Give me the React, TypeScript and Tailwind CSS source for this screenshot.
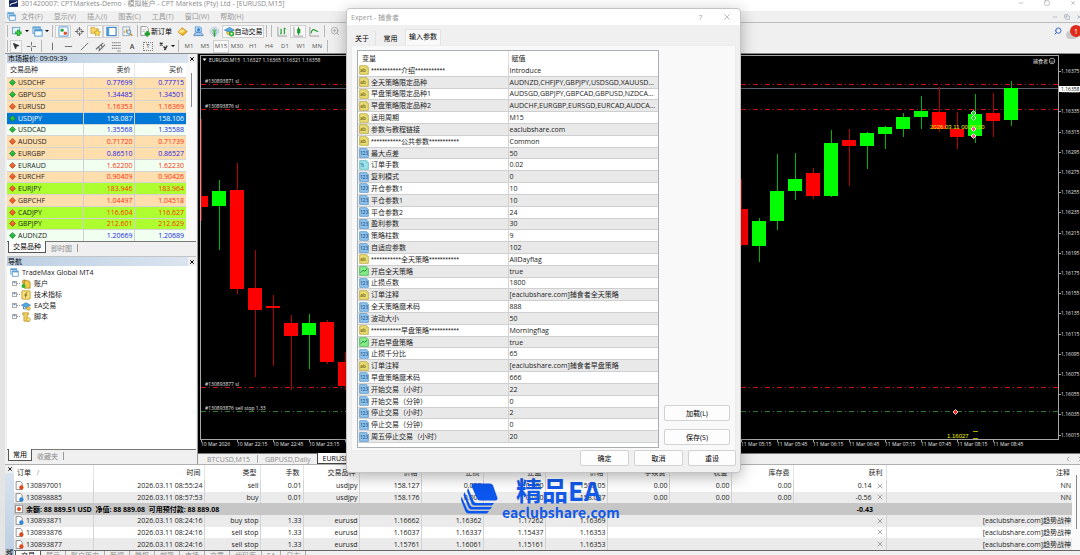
import type { ReactNode } from 'react'
import clsx from 'clsx'
import { Search, X, Minus, Square, Copy, ZoomIn, ZoomOut, MousePointer2, ChevronLeft, ChevronRight } from 'lucide-react'

const FONT = "font-['Open_Sans','Noto_Sans_CJK_SC',sans-serif]"

/* ---------- data ---------- */

type Tone = 'peach' | 'mint' | 'lime' | 'selected'

interface Quote {
  symbol: string
  bid: string
  ask: string
  up: boolean
  blue: boolean
  tone: Tone
}

const quotes: Quote[] = [
  { symbol: 'USDCHF', bid: '0.77699', ask: '0.77715', up: true, blue: true, tone: 'peach' },
  { symbol: 'GBPUSD', bid: '1.34485', ask: '1.34501', up: true, blue: true, tone: 'peach' },
  { symbol: 'EURUSD', bid: '1.16353', ask: '1.16369', up: false, blue: false, tone: 'peach' },
  { symbol: 'USDJPY', bid: '158.087', ask: '158.106', up: true, blue: false, tone: 'selected' },
  { symbol: 'USDCAD', bid: '1.35568', ask: '1.35588', up: true, blue: true, tone: 'mint' },
  { symbol: 'AUDUSD', bid: '0.71720', ask: '0.71739', up: false, blue: false, tone: 'peach' },
  { symbol: 'EURGBP', bid: '0.86510', ask: '0.86527', up: true, blue: true, tone: 'peach' },
  { symbol: 'EURAUD', bid: '1.62200', ask: '1.62230', up: false, blue: false, tone: 'mint' },
  { symbol: 'EURCHF', bid: '0.90409', ask: '0.90426', up: false, blue: false, tone: 'peach' },
  { symbol: 'EURJPY', bid: '183.946', ask: '183.964', up: false, blue: false, tone: 'lime' },
  { symbol: 'GBPCHF', bid: '1.04497', ask: '1.04518', up: false, blue: false, tone: 'peach' },
  { symbol: 'CADJPY', bid: '116.604', ask: '116.627', up: false, blue: false, tone: 'lime' },
  { symbol: 'GBPJPY', bid: '212.601', ask: '212.629', up: false, blue: false, tone: 'lime' },
  { symbol: 'AUDNZD', bid: '1.20669', ask: '1.20689', up: true, blue: true, tone: 'mint' },
]

const toneClass: Record<Tone, string> = {
  peach: 'bg-[#ffdead]',
  mint: 'bg-[#f0fff0]',
  lime: 'bg-[#adff2f]',
  selected: 'bg-[#0078d7] text-white',
}

type ParamKind = 'ab' | 'int' | 'dbl' | 'bool'

const params: [ParamKind, string, string][] = [
  ['ab', '***********介绍***********', 'Introduce'],
  ['ab', '全天策略限定品种', 'AUDNZD,CHFJPY,GBPJPY,USDSGD,XAUUSD...'],
  ['ab', '早盘策略限定品种1', 'AUDSGD,GBPJPY,GBPCAD,GBPUSD,NZDCA...'],
  ['ab', '早盘策略限定品种2', 'AUDCHF,EURGBP,EURSGD,EURCAD,AUDCA...'],
  ['ab', '适用周期', 'M15'],
  ['ab', '参数与教程链接', 'eaclubshare.com'],
  ['ab', '***********公共参数***********', 'Common'],
  ['int', '最大点差', '50'],
  ['dbl', '订单手数', '0.02'],
  ['int', '复利模式', '0'],
  ['int', '开仓参数1', '10'],
  ['int', '平仓参数1', '10'],
  ['int', '平仓参数2', '24'],
  ['int', '盈利参数', '30'],
  ['int', '策略柱数', '9'],
  ['int', '自适应参数', '102'],
  ['ab', '***********全天策略***********', 'AllDayflag'],
  ['bool', '开启全天策略', 'true'],
  ['int', '止损点数', '1800'],
  ['ab', '订单注释', '[eaclubshare.com]捕食者全天策略'],
  ['int', '全天策略魔术码', '888'],
  ['int', '波动大小', '50'],
  ['ab', '***********早盘策略***********', 'Morningflag'],
  ['bool', '开启早盘策略', 'true'],
  ['int', '止损千分比', '65'],
  ['ab', '订单注释', '[eaclubshare.com]捕食者早盘策略'],
  ['int', '早盘策略魔术码', '666'],
  ['int', '开始交易（小时）', '22'],
  ['int', '开始交易（分钟）', '0'],
  ['int', '停止交易（小时）', '2'],
  ['int', '停止交易（分钟）', '0'],
  ['int', '周五停止交易（小时）', '20'],
]

interface Order {
  id: string
  buy: boolean
  cells: string[]
  profit: string
  note: string
}

const openOrders: Order[] = [
  { id: '130897001', buy: false, cells: ['2026.03.11 08:55:24', 'sell', '0.01', 'usdjpy', '158.127', '0.000', '0.000', '158.105', '0.00', '0.00', '0.00'], profit: '0.14', note: 'NN' },
  { id: '130898885', buy: true, cells: ['2026.03.11 08:57:53', 'buy', '0.01', 'usdjpy', '158.176', '0.000', '0.000', '158.087', '0.00', '0.00', '0.00'], profit: '-0.56', note: 'NN' },
]

const pendingOrders: Order[] = [
  { id: '130893871', buy: true, cells: ['2026.03.11 08:24:16', 'buy stop', '1.33', 'eurusd', '1.16662', '1.16362', '1.17262', '1.16369', '', '', ''], profit: '', note: '[eaclubshare.com]趋势战神' },
  { id: '130893876', buy: false, cells: ['2026.03.11 08:24:16', 'sell stop', '1.33', 'eurusd', '1.16037', '1.16337', '1.15437', '1.16353', '', '', ''], profit: '', note: '[eaclubshare.com]趋势战神' },
  { id: '130893877', buy: false, cells: ['2026.03.11 08:24:16', 'sell stop', '1.33', 'eurusd', '1.15761', '1.16061', '1.15161', '1.16353', '', '', ''], profit: '', note: '[eaclubshare.com]趋势战神' },
]

const orderHeads = ['时间', '类型', '手数', '交易品种', '价格', '止损', '止盈', '价格', '手续费', '税金', '库存费']

// centre x, wick top, wick bottom, body top, body bottom, direction
type Candle = [number, number, number, number, number, 'u' | 'd']

const candles: Candle[] = [
  [201, 119, 221, 196, 207, 'd'],
  [219, 180, 250, 191, 206, 'u'],
  [237, 163, 294, 190, 289, 'd'],
  [255, 250, 377, 288, 310, 'd'],
  [273, 295, 366, 306, 308, 'd'],
  [291, 315, 390, 323, 336, 'd'],
  [309, 314, 369, 323, 335, 'u'],
  [327, 320, 364, 322, 362, 'd'],
  [345, 352, 390, 362, 386, 'd'],
  [741, 179, 246, 209, 245, 'd'],
  [759, 218, 262, 221, 246, 'u'],
  [777, 154, 230, 191, 221, 'u'],
  [795, 153, 200, 179, 191, 'u'],
  [813, 168, 199, 173, 196, 'd'],
  [831, 130, 197, 143, 196, 'u'],
  [849, 129, 186, 140, 146, 'd'],
  [867, 132, 169, 133, 146, 'u'],
  [885, 126, 149, 127, 134, 'u'],
  [903, 113, 137, 117, 129, 'u'],
  [921, 96, 129, 111, 117, 'u'],
  [939, 87, 132, 112, 129, 'd'],
  [957, 112, 149, 129, 137, 'd'],
  [975, 94, 143, 114, 136, 'u'],
  [993, 93, 137, 113, 121, 'd'],
  [1011, 81, 126, 88, 120, 'u'],
]

const levels = [
  { y: 84, color: '#c81414', label: '#130893871 sl' },
  { y: 109, color: '#c81414', label: '#130893876 sl' },
  { y: 387, color: '#c81414', label: '#130893877 sl' },
  { y: 411, color: '#2a7a2a', label: '#130893876 sell stop 1.33' },
]

const times: [number, string][] = [
  [201, '10 Mar 2026'], [237, '10 Mar 22:15'], [273, '10 Mar 22:45'], [309, '10 Mar 23:15'], [345, '10 Mar 23:45'],
  [741, '11 Mar 05:15'], [777, '11 Mar 05:45'], [813, '11 Mar 06:15'], [849, '11 Mar 06:45'],
  [885, '11 Mar 07:15'], [921, '11 Mar 07:45'], [957, '11 Mar 08:15'], [993, '11 Mar 08:45'],
]

const prices = Array.from({ length: 19 }, (_, i) => ({ y: 71 + i * 20.2, text: (1.16375 - i * 0.0002).toFixed(5) }))

/* ---------- small icons ---------- */

function Ico({ children, size = 'size-[11px]' }: { children: ReactNode; size?: string }) {
  return <svg viewBox="0 0 12 12" className={clsx(size, 'shrink-0')} aria-hidden="true">{children}</svg>
}

const Windows = ({ size }: { size?: string }) => (
  <Ico size={size}>
    <rect x="1" y="1" width="8" height="7" fill="#e8f4fd" stroke="#5b9fd0" />
    <path d="M1 2h8" stroke="#5b9fd0" strokeWidth="1.6" />
    <rect x="3" y="4" width="8" height="7" fill="#fff" stroke="#4a94cc" />
    <path d="M3 5h8" stroke="#4a94cc" strokeWidth="1.6" />
  </Ico>
)

const Plus = () => (
  <Ico>
    <rect x="0.5" y="1.5" width="8" height="7" fill="#e4f1fa" stroke="#6ba3c8" />
    <path d="M7 4v7M3.5 7.5h7" stroke="#1d9a26" strokeWidth="3" />
    <path d="M7 5v5M4.5 7.5h5" stroke="#3ecf46" strokeWidth="1.4" />
  </Ico>
)

const Quotes = () => (
  <Ico>
    <rect x="1" y="1" width="10" height="10" rx="1" fill="#fff" stroke="#7aaede" strokeWidth="1.3" />
    <circle cx="4.5" cy="4.5" r="1.9" fill="#2ba84a" />
    <circle cx="8" cy="7.8" r="1.9" fill="#e2512d" />
  </Ico>
)

const Target = () => (
  <Ico>
    <circle cx="6" cy="6" r="3" fill="none" stroke="#666" />
    <path d="M6 1v4M6 7v4M1 6h4M7 6h4" stroke="#666" />
  </Ico>
)

const StarFolder = () => (
  <Ico>
    <path d="M1 1.5h4l1 1.5h3v5H1z" fill="#f8d66b" stroke="#c59a2c" strokeWidth=".8" />
    <path d="M8 4l1.1 2.2 2.5.3-1.8 1.7.5 2.5L8 9.5l-2.3 1.2.5-2.5-1.8-1.7 2.5-.3z" fill="#ffe14d" stroke="#b8901f" strokeWidth=".7" />
  </Ico>
)

const Pane = () => (
  <Ico>
    <rect x="1" y="1.5" width="10" height="9" fill="#fff" stroke="#2f7cc4" strokeWidth="1.2" />
    <rect x="1" y="1.5" width="2.5" height="9" fill="#4a9be0" />
  </Ico>
)

const DocLens = () => (
  <Ico>
    <rect x="1" y="1" width="7.5" height="9.5" fill="#f2f6fa" stroke="#8fa9bf" />
    <path d="M3 8V5M5 7V3" stroke="#d6a63b" strokeWidth="1.2" />
    <circle cx="7.5" cy="6.5" r="2.2" fill="#d7ecfa" stroke="#5589b5" />
    <path d="M9 8.2l2.2 2.6" stroke="#c08b2d" strokeWidth="1.5" />
  </Ico>
)

const NewOrder = () => (
  <Ico>
    <path d="M1 .7h6l2 2v7.6H1z" fill="#fff" stroke="#777" strokeWidth=".8" />
    <path d="M2.5 4h4M2.5 6h3" stroke="#aaa" strokeWidth=".8" />
    <path d="M8 5.5v6M5 8.5h6" stroke="#1fa32b" strokeWidth="2.6" />
  </Ico>
)

const Diamond = () => (
  <Ico>
    <path d="M1 6.5L5.5 2 11 6l-4.5 4.5z" fill="#f2b526" stroke="#b37a12" strokeWidth=".8" />
    <path d="M1 6.5L5.5 3 9 5.5 5 8z" fill="#ffe07a" />
  </Ico>
)

const Market = () => (
  <Ico>
    <path d="M2.5 1H8l1 1v4.5H2.5z" fill="#d5e8fa" stroke="#3f86cf" strokeWidth=".9" />
    <path d="M1 10.5c0-3 2-3.5 5-3.5s5 1 5 3.5z" fill="#a9cdf0" stroke="#3a76b8" strokeWidth=".8" />
    <circle cx="6" cy="4" r="1.7" fill="#2f86dc" />
  </Ico>
)

const Signal = () => (
  <Ico>
    <circle cx="6" cy="6" r="4.8" fill="none" stroke="#b4cbdc" />
    <circle cx="6" cy="6" r="2.9" fill="none" stroke="#7fa6c4" />
    <path d="M6 6v5.5" stroke="#27a035" strokeWidth="1.8" />
    <circle cx="6" cy="5.5" r="1.6" fill="#53c45d" />
  </Ico>
)

const Hat = () => (
  <Ico>
    <path d="M3 5v3.5c1 1.5 5 1.5 6 0V5z" fill="#f3c74e" stroke="#b98d22" strokeWidth=".6" />
    <path d="M.5 4.5L6 1.5l5.5 3L6 6.5z" fill="#58a9df" stroke="#2f78b2" strokeWidth=".7" />
    <circle cx="8.3" cy="8.5" r="2.9" fill="#2db13c" />
    <path d="M7.4 7v3l2.5-1.5z" fill="#fff" />
  </Ico>
)

function ParamIcon({ kind }: { kind: ParamKind }) {
  const fill = { ab: '#e9dc72', int: '#8fc4ee', dbl: '#9ce3ea', bool: '#86eb8d' }[kind]
  const stroke = { ab: '#b5a436', int: '#4f8ec6', dbl: '#4fb4bd', bool: '#3cb546' }[kind]
  return (
    <Ico size="size-[10px]">
      <path d="M.8.8h8.4l2 2v8.4H.8z" fill={fill} stroke={stroke} strokeWidth=".9" />
      <path d="M9 1v2h2" fill="#fff" stroke={stroke} strokeWidth=".6" />
      {kind === 'bool' ? (
        <path d="M2 8l3-3 1.5 1.5L9.5 4" fill="none" stroke="#187b22" strokeWidth="1.1" />
      ) : (
        <text x="1.5" y="8.8" fontSize="5.5" fontWeight="600" fill={kind === 'ab' ? '#6b5d10' : '#1d4f86'}>
          {kind === 'ab' ? 'ab' : kind === 'int' ? '123' : '½'}
        </text>
      )}
    </Ico>
  )
}

function TickIcon({ up }: { up: boolean }) {
  return (
    <Ico size="size-[7px]">
      <path d="M6 1l5 5-5 5-5-5z" fill={up ? '#22b83a' : '#f0602c'} stroke={up ? '#0d7a20' : '#a93409'} strokeWidth="1.2" />
      <path d="M4 5l2-2 2 2" fill="none" stroke="#fff" strokeOpacity=".4" />
    </Ico>
  )
}

function OrderIcon({ buy }: { buy: boolean }) {
  return (
    <Ico size="size-[9px]">
      <path d="M1.5.7h6l2 2v8.6h-8z" fill="#fff" stroke="#666" strokeWidth=".9" />
      <circle cx="8.5" cy="8.7" r="2.9" fill={buy ? '#2f86d6' : '#e0481c'} />
    </Ico>
  )
}

/* ---------- window chrome ---------- */

function TitleBar() {
  return (
    <header className="flex h-[11px] shrink-0 items-start bg-white pl-1 text-[#8a8a8a]">
      <svg viewBox="0 0 12 9" className="mr-[3px] h-[7px] w-[9px]" aria-hidden="true">
        <rect width="12" height="9" fill="#12235a" />
        <path d="M1 7c3-5 6-1 10-5" fill="none" stroke="#fff" strokeWidth="1.5" />
      </svg>
      <h1 className="leading-[7px]">301420007: CPTMarkets-Demo - 模拟帐户 - CPT Markets (Pty) Ltd - [EURUSD,M15]</h1>
      <div className="ml-auto flex gap-5 pr-1">
        <button aria-label="最小化"><Minus className="size-1.5" /></button>
        <button aria-label="最大化"><Square className="size-1.5" /></button>
        <button aria-label="关闭"><X className="size-1.5" /></button>
      </div>
    </header>
  )
}

function MenuBar() {
  return (
    <nav className="flex h-3 shrink-0 items-center gap-[11px] border-b border-[#bdbdbd] pl-0.5 text-[#999]">
      <div className="-mr-1.5 flex"><Windows size="size-[9px]" /></div>
      {['文件(F)', '显示(V)', '插入(I)', '图表(C)', '工具(T)', '窗口(W)', '帮助(H)'].map(m => (
        <button key={m}>{m}</button>
      ))}
      <div className="ml-auto flex gap-1.5 text-[#7d93a8]">
        <button aria-label="最小化窗口"><Minus className="size-1.5" /></button>
        <button aria-label="还原窗口"><Copy className="size-1.5" /></button>
        <button aria-label="关闭窗口"><X className="-mr-0.5 size-1.5" /></button>
      </div>
    </nav>
  )
}

function Tool({ label, on, children, className = 'w-4' }: { label: string; on?: boolean; children: ReactNode; className?: string }) {
  return (
    <button
      aria-label={label}
      className={clsx('flex h-[13px] shrink-0 items-center justify-center', className, on && 'border border-[#d0d0d0] bg-[#f8f8f8]')}
    >
      {children}
    </button>
  )
}

const Sep = () => <span className="mx-0.5 h-3 w-px shrink-0 bg-[#b8b8b8]" />
const Caret = () => <span className="ml-0.5 border-x-2 border-t-2 border-x-transparent border-t-black" />

function Toolbars() {
  return (
    <div className="flex shrink-0 items-start justify-between border-b border-[#8c8c8c]">
      <div>
        <div className="flex h-4 items-center">
          <Sep />
          <Tool label="新图表" className="w-5"><Plus /><Caret /></Tool>
          <Tool label="配置文件" className="w-5"><Windows /><Caret /></Tool>
          <Sep />
          <Tool label="市场报价" on><Quotes /></Tool>
          <Tool label="数据窗口"><Target /></Tool>
          <Tool label="导航" on><StarFolder /></Tool>
          <Tool label="终端" on><Pane /></Tool>
          <Tool label="策略测试"><DocLens /></Tool>
          <Sep />
          <Tool label="新订单" className="mr-0.5 w-auto"><NewOrder /><span className="text-black">新订单</span></Tool>
          <Tool label="编辑器"><Diamond /></Tool>
          <Tool label="市场"><Market /></Tool>
          <Tool label="信号"><Signal /></Tool>
          <Tool label="自动交易" on className="w-[42px]"><Hat /><span className="text-black">自动交易</span></Tool>
          <Sep />
          <Sep />
          <Tool label="柱状图">
            <Ico><path d="M1 1v10h10" fill="none" stroke="#999" /><path d="M4.5 3v6M3.5 8h1M8 2v7M8 3h1.5" fill="none" stroke="#1c9a2c" strokeWidth="1.2" /></Ico>
          </Tool>
          <Tool label="阴阳烛" on>
            <Ico><path d="M1 1v10h10" fill="none" stroke="#999" /><path d="M6 1v9" stroke="#1c9a2c" /><rect x="4.5" y="3" width="3.5" height="5" fill="#1c9a2c" /></Ico>
          </Tool>
          <Tool label="折线图">
            <Ico><path d="M1 1v10h10" fill="none" stroke="#999" /><path d="M2 8c2-7 4-3 8-2" fill="none" stroke="#1c9a2c" strokeWidth="1.3" /></Ico>
          </Tool>
          <Sep />
          <Tool label="放大"><ZoomIn className="size-2.5 text-[#a5a5a5]" /></Tool>
          <Tool label="缩小"><ZoomOut className="size-2.5 text-[#4c95cc]" /></Tool>
        </div>
        <div className="flex h-3.5 items-center">
          <Sep />
          <Tool label="光标" on className="mr-px w-3"><MousePointer2 className="size-2 fill-[#333] text-[#333]" /></Tool>
          <Tool label="十字线"><Ico><path d="M6 1v4M6 7v4M1 6h4M7 6h4" stroke="#666" /></Ico></Tool>
          <Sep />
          <Tool label="垂直线"><Ico><path d="M6 2v8" stroke="#666" /></Ico></Tool>
          <Tool label="水平线"><Ico><path d="M2 6h8" stroke="#666" /></Ico></Tool>
          <Tool label="趋势线"><Ico><path d="M2 10l8-8" stroke="#666" /></Ico></Tool>
          <Tool label="通道"><Ico><path d="M1 9l8-7M4 11l7-7M4 6l1 4M7 4l1 4" stroke="#666" strokeWidth="1.1" /></Ico></Tool>
          <Tool label="斐波那契"><Ico><path d="M1 2h10M1 5h10M1 8h10M7 11h4" stroke="#777" strokeWidth="1.1" strokeDasharray="1.5 .5" /></Ico></Tool>
          <Tool label="文字"><b className="font-semibold text-[#444]">A</b></Tool>
          <Tool label="标签">
            <span className="border border-dotted border-[#777] px-0.5 text-[6px] leading-[7px] text-[#444]">T</span>
          </Tool>
          <Tool label="箭头" className="w-5"><Ico><path d="M2 2l3 3M5 2L2 5M6 6l3 3M10 5L7 10" stroke="#333" strokeWidth="1.5" /></Ico><Caret /></Tool>
          <Sep />
          <div className="flex text-[6px] text-[#555]">
            {['M1', 'M5', 'M15', 'M30', 'H1', 'H4', 'D1', 'W1', 'MN'].map(p => (
              <Tool key={p} label={p} on={p === 'M15'}>{p}</Tool>
            ))}
          </div>
          <Sep />
        </div>
      </div>
      <div className="flex h-4 items-center gap-2">
        <button aria-label="搜索"><Search className="size-2 -scale-x-100 text-[#3465c8]" strokeWidth={3} /></button>
        <button aria-label="通知" className="relative -mr-0.5 flex size-3 items-center justify-center rounded-full bg-[#dd2a1b] text-white">
          <span className="absolute -bottom-0.5 -left-1 -z-10 h-2 w-3 rounded-full bg-[#c9c9c9]" />
          1
        </button>
      </div>
    </div>
  )
}

function PanelHead({ children }: { children: ReactNode }) {
  return (
    <div className="flex h-[9px] shrink-0 items-center justify-between bg-linear-to-r from-[#bccfe2] to-[#dbe5f0] pl-px text-black">
      <h2>{children}</h2>
      <button aria-label="关闭面板" className="flex h-full w-2 items-center justify-center bg-[#f0f0f0]"><X className="size-1.5" strokeWidth={4} /></button>
    </div>
  )
}

function PanelTabs({ items }: { items: [string, string] }) {
  return (
    <div className="flex h-[15px] shrink-0 items-start border-t border-[#777] pl-px">
      <button className="-mt-px h-3 border border-t-0 border-[#555] bg-white px-1 text-black">{items[0]}</button>
      <button className="h-3 px-[5px] text-[#8c8c8c]">{items[1]}</button>
      <span className="mt-0.5 h-2 w-px bg-[#999]" />
    </div>
  )
}

function MarketWatch() {
  return (
    <section className="flex shrink-0 flex-col">
      <PanelHead>市场报价: 09:09:39</PanelHead>
      <div className="flex bg-white">
        <table className="h-[178px] flex-1 table-fixed border-collapse">
          <colgroup>
            <col />
            <col className="w-[51px]" />
            <col className="w-[52px]" />
          </colgroup>
          <thead>
            <tr className="h-3.5">
              <th className="border-r border-[#e8e8e8] pl-[3px] text-left font-normal">交易品种</th>
              <th className="border-r border-[#e8e8e8] pr-[3px] text-right font-normal">卖价</th>
              <th className="pr-[3px] text-right font-normal">买价</th>
            </tr>
          </thead>
          <tbody>
            {quotes.map(q => (
              <tr key={q.symbol} className={clsx('border-t border-[#d4d4d4]', toneClass[q.tone])}>
                <td className="border-r border-[#d0d0d0] pl-0.5">
                  <span className="flex items-center gap-0.5"><TickIcon up={q.up} />{q.symbol}</span>
                </td>
                <td className={clsx('border-r border-[#d0d0d0] pr-px text-right', q.tone !== 'selected' && (q.blue ? 'text-[#2222e8]' : 'text-[#ff2d10]'))}>{q.bid}</td>
                <td className={clsx('pr-0.5 text-right', q.tone !== 'selected' && (q.blue ? 'text-[#2222e8]' : 'text-[#ff2d10]'))}>{q.ask}</td>
              </tr>
            ))}
          </tbody>
        </table>
        <div className="flex w-2.5 justify-center bg-[#fafafa] pt-2.5"><span className="h-[34px] w-px bg-[#888]" /></div>
      </div>
      <PanelTabs items={['交易品种', '即时图']} />
    </section>
  )
}

function Navigator() {
  const nodes: [string, ReactNode][] = [
    ['账户', <><circle cx="4" cy="3.5" r="2.5" fill="#e8b73c" stroke="#8c6a12" strokeWidth=".6" /><path d="M4 2h4q3 0 3 3v6H4z" fill="#f3c945" stroke="#9a7514" strokeWidth=".8" /><circle cx="3" cy="8.5" r="2.4" fill="#27b53a" /></>],
    ['技术指标', <><rect x="1" y="1" width="10" height="10" rx="1" fill="#f7e07c" stroke="#bb9a2a" /><path d="M7.5 3c-1.5 0-1.5 1-2 6M4 6h3.5" fill="none" stroke="#6b5510" /></>],
    ['EA交易', <><path d="M.5 5L6 2l5.5 3L6 8z" fill="#55a9e0" stroke="#2b71a8" strokeWidth=".7" /><path d="M3 7v2.5h4" stroke="#2b71a8" fill="none" /><circle cx="9" cy="9" r="2.2" fill="#f4cb4a" stroke="#a27d17" strokeWidth=".6" /></>],
    ['脚本', <><path d="M2 1h7v2H7.5v6H10v2H3.5V3H2z" fill="#f5d25a" stroke="#aa8722" strokeWidth=".8" /><circle cx="9" cy="9" r="2.2" fill="#ffe680" stroke="#a27d17" strokeWidth=".6" /></>],
  ]
  return (
    <section className="flex min-h-0 flex-1 flex-col border-t border-[#c4c4c4]">
      <PanelHead>导航</PanelHead>
      <div className="min-h-0 flex-1 bg-white pl-[3px]">
        <div className="flex h-3 items-center gap-[3px]"><Windows size="size-[9px]" />TradeMax Global MT4</div>
        <ul className="ml-0.5">
          {nodes.map(([name, icon]) => (
            <li key={name} className="flex h-[11px] items-center">
              <span className="flex size-[5px] items-center justify-center border border-[#aaa] text-[5px] leading-none text-[#2a54a0]">+</span>
              <span className="mr-px w-[3px] border-t border-dotted border-[#999]" />
              <Ico size="size-[10px]">{icon}</Ico>
              <span className="ml-[3px]">{name}</span>
            </li>
          ))}
        </ul>
      </div>
      <PanelTabs items={['常用', '收藏夹']} />
    </section>
  )
}

/* ---------- chart ---------- */

const Marker = ({ x, y, fill }: { x: number; y: number; fill: string }) => (
  <path d={`M${x} ${y - 2.5}l2.5 2.5-2.5 2.5-2.5-2.5z`} fill={fill} stroke="#fff" strokeWidth=".8" />
)

function Chart() {
  return (
    <svg viewBox="198 54 882 399" preserveAspectRatio="xMaxYMin slice" className="min-h-0 w-full flex-1 bg-black" fontSize="5" fill="#e6e6e6">
      <g shapeRendering="crispEdges">
        <path d="M200.500 439.500V55.500H1058.500V439.500Z" fill="none" stroke="#a8a8a8" />
        {levels.map(l => (
          <path key={l.y} d={`M201 ${l.y + 0.5}H1058`} stroke={l.color} strokeDasharray="5 3 1 3" />
        ))}
        <path d="M201 88.500H1058" stroke="#5c6674" />
        {candles.map(([x, hi, lo, top, bottom, dir]) => {
          const left = Math.max(x - 7, 201)
          return (
            <g key={x}>
              <path d={`M${x + 0.5} ${hi}V${lo}`} stroke={dir === 'u' ? '#00b400' : '#b40000'} />
              <rect x={left} y={top} width={x + 7 - left} height={bottom - top} fill={dir === 'u' ? '#00ff00' : '#ff0000'} />
            </g>
          )
        })}
        {times.map(([x]) => <path key={x} d={`M${x + 0.5} 439v3`} stroke="#a8a8a8" />)}
        {prices.map(p => <path key={p.text} d={`M1058 ${Math.round(p.y) + 0.5}h3`} stroke="#a8a8a8" />)}
        <path d="M973 431.500h5M973 438.500h5" stroke="#a8a800" />
      </g>
      <path d="M202.500 58.500h4l-2 2.500z" fill="#fff" />
      <text x="209" y="62">EURUSD,M15&nbsp; 1.16327 1.16365 1.16321 1.16358</text>
      {levels.map(l => <text key={l.label} x="205" y={l.y - 1}>{l.label}</text>)}
      {times.map(([x, t]) => <text key={t} x={x} y="446">{t}</text>)}
      {prices.map(p => <text key={p.text} x="1061" y={p.y + 2}>{p.text}</text>)}
      <rect x="1059" y="86" width="21" height="6" fill="#fff" />
      <text x="1061" y="91" fill="#000">1.16358</text>
      <text x="1033" y="63">捕食者</text>
      <circle cx="1052" cy="61" r="2.8" fill="none" stroke="#ddd" strokeWidth=".7" />
      <path d="M1050.500 61.500q1.500 1.800 3 0M1051 60v.4M1053 60v.4" fill="none" stroke="#ddd" strokeWidth=".7" />
      <g className="font-['Liberation_Sans',sans-serif]" fontSize="6" fill="#f0f000">
        <text x="930" y="129">2026.03.11 00:00:00</text>
        <text x="947" y="438">1.16027</text>
      </g>
      <Marker x={973.5} y={113} fill="#2ad02a" />
      <Marker x={973.5} y={118} fill="#2ad02a" />
      <Marker x={973.5} y={129} fill="#ff5090" />
      <Marker x={973.5} y={136} fill="#ff5090" />
      <Marker x={955.5} y={412} fill="#ff2020" />
    </svg>
  )
}

function ChartTabs() {
  return (
    <div className="flex h-[11px] shrink-0 items-center border-t border-[#777] pl-[9px] text-[#8c8c8c]">
      <button>BTCUSD,M15</button>
      <span className="mx-[7px] h-2 w-px bg-[#aaa]" />
      <button>GBPUSD,Daily</button>
      <button className="ml-1.5 -mt-px h-[11px] border border-t-0 border-[#444] bg-white px-[5px] text-black">EURUSD,M15</button>
      <div className="ml-auto flex gap-1 text-[#888]">
        <button aria-label="上一个"><ChevronLeft className="size-2" /></button>
        <button aria-label="下一个"><ChevronRight className="-mr-1 size-2" /></button>
      </div>
    </div>
  )
}

/* ---------- terminal ---------- */

function OrderRow({ order, shaded }: { order: Order; shaded: boolean }) {
  return (
    <tr className={shaded ? 'bg-[#ebebeb]' : 'bg-white'}>
      <td className="border-r border-[#d4d4d4] pl-px">
        <span className="flex items-center gap-0.5"><OrderIcon buy={order.buy} />{order.id}</span>
      </td>
      {order.cells.map((c, i) => (
        <td key={i} className={clsx('pr-px text-right', (c || i < 8) && 'border-r border-[#d4d4d4]')}>{c}</td>
      ))}
      <td className="border-r border-[#d4d4d4] pr-0.5">
        <span className="flex items-center justify-end gap-1">
          {order.profit}
          <button aria-label={`平仓 ${order.id}`}><X className="size-2 text-[#777]" /></button>
        </span>
      </td>
      <td className="pr-px text-right">{order.note}</td>
    </tr>
  )
}

function Terminal() {
  return (
    <section className="flex h-[91px] shrink-0 border-t border-[#b0b0b0]">
      <div className="flex w-[9px] shrink-0 flex-col items-center justify-between overflow-hidden bg-linear-to-b from-[#dbe5f0] to-[#bccfe2]">
        <button aria-label="关闭终端" className="flex h-2 w-full items-center justify-center bg-[#f0f0f0]"><X className="size-1.5" strokeWidth={4} /></button>
        <h2 className="-mb-2 text-black [writing-mode:sideways-lr]">终端</h2>
      </div>
      <div className="flex min-w-0 flex-1 flex-col">
        <div className="flex border-b border-[#666] bg-white">
          <table className="h-[85px] flex-1 table-fixed border-collapse">
            <colgroup>
              <col className="w-[79px]" />
              <col className="w-[111px]" />
              <col className="w-[56px]" />
              <col className="w-[43px]" />
              <col className="w-[56px]" />
              <col className="w-[62px]" />
              <col className="w-[62px]" />
              <col className="w-[62px]" />
              <col className="w-[62px]" />
              <col className="w-[62px]" />
              <col className="w-[62px]" />
              <col className="w-[62px]" />
              <col className="w-[93px]" />
              <col />
            </colgroup>
            <thead>
              <tr className="h-[15px]">
                <th className="border-r border-[#e4e4e4] pl-[3px] text-left font-normal">订单 <span className="pl-1 text-[#888]">∕</span></th>
                {orderHeads.map((h, i) => (
                  <th key={i} className="border-r border-[#e4e4e4] pr-[3px] text-right font-normal">{h}</th>
                ))}
                <th className="border-r border-[#e4e4e4] pr-[3px] text-right font-normal">获利</th>
                <th className="pr-0.5 text-right font-normal">注释</th>
              </tr>
            </thead>
            <tbody>
              {openOrders.map((o, i) => <OrderRow key={o.id} order={o} shaded={i % 2 === 1} />)}
              <tr className="bg-[#c6c6c6] font-bold text-black">
                <td colSpan={12} className="pl-px">
                  <span className="flex items-center gap-[3px]">
                    <Ico size="size-[8px]"><rect x="1" y=".5" width="10" height="11" fill="#fff" stroke="#777" /><circle cx="6" cy="6" r="3" fill="#e0481c" /></Ico>
                    余额: 88 889.51 USD&nbsp; 净值: 88 889.08&nbsp; 可用预付款: 88 889.08
                  </span>
                </td>
                <td className="pr-[13px] text-right">-0.43</td>
                <td />
              </tr>
              {pendingOrders.map((o, i) => <OrderRow key={o.id} order={o} shaded={i % 2 === 0} />)}
            </tbody>
          </table>
          <div className="flex w-2 justify-center bg-[#fafafa] pt-2.5"><span className="h-[54px] w-px bg-[#888]" /></div>
        </div>
        <div className="flex h-1 items-start overflow-hidden pl-px text-[#8c8c8c]">
          <button className="border-x border-[#555] bg-white px-[5px] text-black">交易</button>
          {['展示', '账户历史', '新闻', '警报', '邮箱', '市场', '文章', '代码库', 'EA', '日志'].map(t => (
            <button key={t} className="border-r border-[#aaa] px-[5px]">{t}</button>
          ))}
        </div>
      </div>
    </section>
  )
}

/* ---------- expert dialog ---------- */

function DialogButton({ children, className }: { children: ReactNode; className: string }) {
  return <button className={clsx('h-4 rounded-xs border border-[#d2d2d2] bg-[#fdfdfd] text-black', className)}>{children}</button>
}

function ExpertDialog() {
  return (
    <div role="dialog" aria-label="Expert" className="absolute top-2 left-[341px] flex w-[395px] flex-col rounded-sm border border-[#c4c4c4] bg-[#f0f0f0] pb-1.5 shadow-[0_4px_16px_rgba(0,0,0,0.3)]">
      <div className="flex h-4 items-center rounded-t-sm bg-white pr-2 pl-1 text-[#999]">
        <h2>Expert - 捕食者</h2>
        <button aria-label="帮助" className="mr-5 ml-auto">?</button>
        <button aria-label="关闭"><X className="size-2.5" strokeWidth={1.5} /></button>
      </div>
      <div role="tablist" className="flex items-end pt-1 pl-0.5 text-black">
        <button role="tab" className="h-3.5 w-[26px]">关于</button>
        <button role="tab" className="h-3.5 w-[30px] border-l border-[#e2e2e2]">常用</button>
        <button role="tab" aria-selected="true" className="h-4 w-9 border border-b-0 border-[#e2e2e2] bg-[#f9f9f9] pb-0.5">输入参数</button>
      </div>
      <div className="mx-1 flex gap-[5px] border border-[#ececec] bg-[#f9f9f9] px-[5px] pt-1 pb-0.5">
        <div className="w-[302px] border border-[#a9aeb5] bg-white pb-1">
          <table className="h-[392px] w-full table-fixed border-collapse">
            <thead>
              <tr className="h-3.5">
                <th className="w-[150px] border-r border-[#e0e0e0] pl-1 text-left font-normal">变量</th>
                <th className="pl-[3px] text-left font-normal">赋值</th>
              </tr>
            </thead>
            <tbody>
              {params.map(([kind, name, value], i) => (
                <tr key={i} className={clsx('border-b border-[#cfcfcf]', i % 2 === 1 && 'bg-[#e9e9e9]')}>
                  <td className="border-r border-[#d4d4d4]">
                    <span className="flex items-center gap-0.5 pl-px whitespace-nowrap">
                      <ParamIcon kind={kind} />
                      {/* section titles use the narrow asterisk */}
                      <span className={clsx(name.startsWith('*') && "font-['Liberation_Sans','Noto_Sans_CJK_SC',sans-serif]")}>{name}</span>
                    </span>
                  </td>
                  <td className="overflow-hidden pl-px whitespace-nowrap">{value}</td>
                </tr>
              ))}
            </tbody>
          </table>
        </div>
        <div className="flex flex-1 flex-col justify-end gap-2 pb-[3px]">
          <DialogButton className="w-full">加载(L)</DialogButton>
          <DialogButton className="w-full">保存(S)</DialogButton>
        </div>
      </div>
      <div className="-mt-px flex justify-end gap-[5px] pr-1">
        <DialogButton className="w-[49px]">确定</DialogButton>
        <DialogButton className="w-[49px]">取消</DialogButton>
        <DialogButton className="w-[48px]">重设</DialogButton>
      </div>
    </div>
  )
}

function Watermark() {
  return (
    <div className="absolute top-[478px] left-[456px] flex items-start gap-1 font-['Noto_Sans_CJK_SC',sans-serif] font-bold text-[#1259e8]">
      <svg viewBox="0 0 37 32" className="mt-1 h-8 w-[37px]" fill="#0a56ee" aria-hidden="true">
        <path d="M12 1.500h17q2 0 3 2l4.300 12q.7 2.500-1.800 3H19q-2 0-3-2L10.500 4q-.5-2 1.500-2.500z" />
        <path d="M7 6l5.500 13q1 2 3 2H33l-2 2.500H13.500q-2 0-3-2L6 9z" />
        <path d="M3.500 10l5.500 13q1 2 3 2h19l-2 2.500H10.500q-2 0-3-2L2.500 13z" />
        <path d="M.5 14.500L6 27q1 2 3 2h19l-2 2.500H7.500q-2 0-3-2L0 18z" />
      </svg>
      <div>
        <p className="pl-3.5 text-[26px] leading-6">精品EA</p>
        <p className="text-[14px] leading-5">eaclubshare.com</p>
      </div>
    </div>
  )
}

export default function App() {
  return (
    <div className={clsx('relative isolate flex h-screen flex-col overflow-hidden border-l-[5px] border-[#e4e4e4] bg-[#f0f0f0] text-[7px] leading-[9px] text-[#222]', FONT)}>
      <TitleBar />
      <MenuBar />
      <Toolbars />
      <main className="flex min-h-0 flex-1">
        <aside className="flex w-[193px] shrink-0 flex-col border-r border-[#999] pr-px pl-0.5">
          <MarketWatch />
          <Navigator />
        </aside>
        <div className="flex min-w-0 flex-1 flex-col">
          <Chart />
          <ChartTabs />
        </div>
      </main>
      <Terminal />
      <Watermark />
      <ExpertDialog />
    </div>
  )
}
